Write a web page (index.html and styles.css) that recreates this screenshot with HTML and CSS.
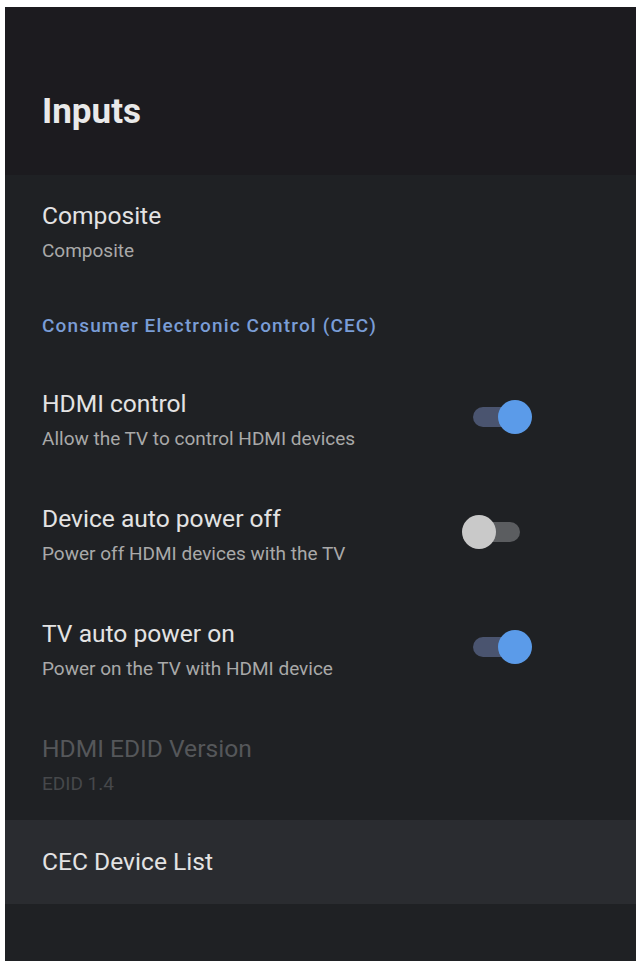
FILE: index.html
```html
<!DOCTYPE html>
<html>
<head>
<meta charset="utf-8">
<link rel="stylesheet" href="styles.css">
</head>
<body>
<div class="panel">
  <header class="header">
    <h1 class="title">Inputs</h1>
  </header>
  <div class="list">
    <div class="item item-first">
      <div class="texts">
        <div class="item-title">Composite</div>
        <div class="item-sub">Composite</div>
      </div>
    </div>
    <div class="section">Consumer Electronic Control (CEC)</div>
    <div class="item item-toggle">
      <div class="texts">
        <div class="item-title">HDMI control</div>
        <div class="item-sub">Allow the TV to control HDMI devices</div>
      </div>
      <div class="toggle on"><span class="track"></span><span class="thumb"></span></div>
    </div>
    <div class="item item-toggle">
      <div class="texts">
        <div class="item-title">Device auto power off</div>
        <div class="item-sub">Power off HDMI devices with the TV</div>
      </div>
      <div class="toggle off"><span class="track"></span><span class="thumb"></span></div>
    </div>
    <div class="item item-toggle">
      <div class="texts">
        <div class="item-title">TV auto power on</div>
        <div class="item-sub">Power on the TV with HDMI device</div>
      </div>
      <div class="toggle on"><span class="track"></span><span class="thumb"></span></div>
    </div>
    <div class="item item-disabled">
      <div class="texts">
        <div class="item-title">HDMI EDID Version</div>
        <div class="item-sub">EDID 1.4</div>
      </div>
    </div>
    <div class="row-focused">
      <div class="item-title">CEC Device List</div>
    </div>
  </div>
</div>
</body>
</html>
```
FILE: styles.css
```css
html, body {
  margin: 0;
  padding: 0;
  background: #ffffff;
}
body {
  font-family: Roboto, "Liberation Sans", Arial, sans-serif;
  padding: 7px 4px 3px 5px;
}
.panel {
  height: 954px;
  background: #1f2124;
  display: flex;
  flex-direction: column;
  overflow: hidden;
}
.header {
  box-sizing: border-box;
  height: 168px;
  padding: 85px 0 0 37px;
  background: #1c1b1f;
}
.title {
  margin: 0;
  font-size: 35px;
  line-height: 40px;
  font-weight: 700;
  color: #e9e9e9;
}
.list {
  display: flex;
  flex-direction: column;
}
.item {
  display: flex;
  align-items: flex-start;
  padding: 0 104px 0 37px;
}
.texts {
  flex: 1;
}
.item-title {
  font-size: 24.6px;
  line-height: 32px;
  color: #e3e3e3;
}
.item-sub {
  font-size: 19px;
  line-height: 38px;
  color: #a9a9a9;
}
.item-first {
  padding-top: 25px;
}
.section {
  padding: 41px 0 0 37px;
  font-size: 19px;
  line-height: 30px;
  font-weight: 500;
  letter-spacing: 1.15px;
  color: #7a9dd6;
}
.item-toggle {
  padding-top: 47px;
}
.item-toggle + .item-toggle,
.item-toggle + .item-disabled {
  padding-top: 45px;
}
.item-disabled .item-title {
  color: #55575a;
}
.item-disabled .item-sub {
  color: #46484b;
}
.row-focused {
  box-sizing: border-box;
  margin-top: 17px;
  height: 84px;
  display: flex;
  align-items: center;
  padding-left: 37px;
  background: #2a2c30;
}
.toggle {
  position: relative;
  width: 70px;
  height: 34px;
  margin-top: 12px;
}
.track {
  position: absolute;
  left: 11px;
  top: 7px;
  width: 47px;
  height: 20px;
  border-radius: 10px;
}
.thumb {
  position: absolute;
  top: 0;
  width: 34px;
  height: 34px;
  border-radius: 50%;
}
.toggle.on .track {
  background: #4a546f;
}
.toggle.on .thumb {
  left: 36px;
  background: #5b9be9;
}
.toggle.off .track {
  background: #5b5d60;
}
.toggle.off .thumb {
  left: 0;
  background: #c9c9c9;
}
```
